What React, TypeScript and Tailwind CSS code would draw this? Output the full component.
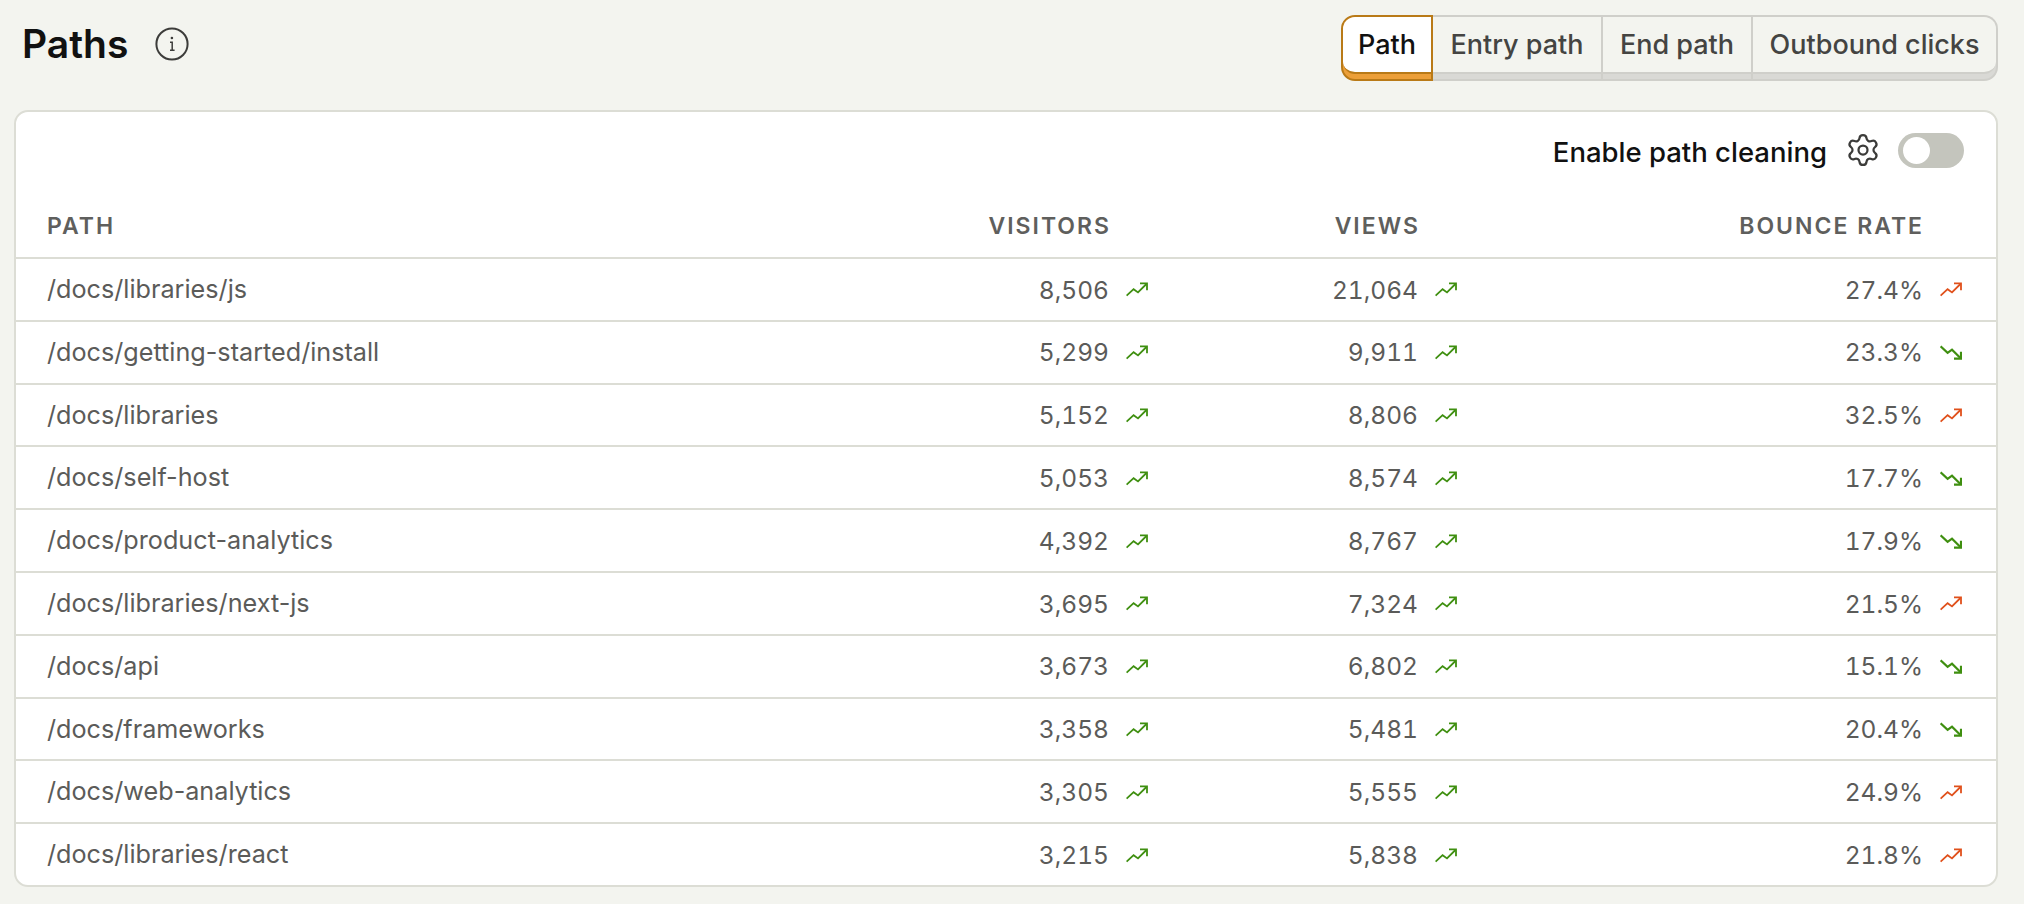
import React from 'react';
import { Settings } from 'lucide-react';

type Trend = 'up' | 'down';

interface Row {
  path: string;
  visitors: string;
  views: string;
  bounce: string;
  bounceTrend: Trend;
  bounceColor: 'good' | 'bad';
}

const rows: Row[] = [
  { path: '/docs/libraries/js', visitors: '8,506', views: '21,064', bounce: '27.4%', bounceTrend: 'up', bounceColor: 'bad' },
  { path: '/docs/getting-started/install', visitors: '5,299', views: '9,911', bounce: '23.3%', bounceTrend: 'down', bounceColor: 'good' },
  { path: '/docs/libraries', visitors: '5,152', views: '8,806', bounce: '32.5%', bounceTrend: 'up', bounceColor: 'bad' },
  { path: '/docs/self-host', visitors: '5,053', views: '8,574', bounce: '17.7%', bounceTrend: 'down', bounceColor: 'good' },
  { path: '/docs/product-analytics', visitors: '4,392', views: '8,767', bounce: '17.9%', bounceTrend: 'down', bounceColor: 'good' },
  { path: '/docs/libraries/next-js', visitors: '3,695', views: '7,324', bounce: '21.5%', bounceTrend: 'up', bounceColor: 'bad' },
  { path: '/docs/api', visitors: '3,673', views: '6,802', bounce: '15.1%', bounceTrend: 'down', bounceColor: 'good' },
  { path: '/docs/frameworks', visitors: '3,358', views: '5,481', bounce: '20.4%', bounceTrend: 'down', bounceColor: 'good' },
  { path: '/docs/web-analytics', visitors: '3,305', views: '5,555', bounce: '24.9%', bounceTrend: 'up', bounceColor: 'bad' },
  { path: '/docs/libraries/react', visitors: '3,215', views: '5,838', bounce: '21.8%', bounceTrend: 'up', bounceColor: 'bad' },
];

const tabs = [
  { label: 'Entry path', width: 'w-[168px]' },
  { label: 'End path', width: 'w-[150px]' },
  { label: 'Outbound clicks', width: 'w-[245px]' },
];

function InfoIcon() {
  return (
    <svg viewBox="0 0 34 34" fill="none" stroke="currentColor" className="h-[34px] w-[34px] text-[#3c3c3a]">
      <circle cx="17" cy="17" r="15.6" strokeWidth="2" />
      <path d="M15 15.2 H17.2 V23.2 M15 23.2 H19.6" strokeWidth="1.5" />
      <circle cx="16.9" cy="11" r="1.3" fill="currentColor" stroke="none" />
    </svg>
  );
}

function TrendIcon({ trend, bad }: { trend: Trend; bad?: boolean }) {
  const color = bad ? 'text-[#e0501b]' : 'text-[#3f8f10]';
  return (
    <svg viewBox="0 0 22 15" fill="none" stroke="currentColor" strokeWidth="1.8" className={`h-[15px] w-[22px] shrink-0 ${color}`}>
      {trend === 'up' ? (
        <>
          <path d="M0.6 13.6 L7.6 7.2 L12 10.4 L20.4 2" />
          <path d="M14 1.3 H21 V8.2" />
        </>
      ) : (
        <>
          <path d="M0.6 1.4 L7.6 7.8 L12 4.6 L20.4 13" strokeWidth="2.2" />
          <path d="M14 13.7 H21 V6.8" strokeWidth="2.2" />
        </>
      )}
    </svg>
  );
}

function Cell({ value, trend, bad }: { value: string; trend: Trend; bad?: boolean }) {
  return (
    <div className="flex items-center justify-end gap-[17px]">
      <span className="text-[24.5px] tabular-nums">{value}</span>
      <TrendIcon trend={trend} bad={bad} />
    </div>
  );
}

export default function App() {
  return (
    <div className="min-h-screen bg-[#f3f4ef] pl-[14px] pr-[26px] pt-[15px] font-['Inter',sans-serif]">
      {/* Header */}
      <div className="flex h-[66px] items-start justify-between">
        <div className="flex items-center gap-[27px] pl-[8px] pt-[9px]">
          <h1 className="text-[39px] font-semibold leading-[40px] text-[#111111]">Paths</h1>
          <InfoIcon />
        </div>

        <div className="flex h-[66px] text-[27px] font-medium">
          <div className="flex w-[92px] flex-col rounded-l-[14px] border-2 border-[#b97a17] bg-[#ec9f38]">
            <div className="flex h-[57px] items-center justify-center rounded-l-[12px] border-b-2 border-[#b97a17] bg-white pt-[2px] text-[#111111]">
              Path
            </div>
          </div>
          <div className="flex overflow-hidden rounded-r-[14px] border-y-2 border-r-2 border-[#cfcfca] bg-[#d9d9d5]">
            {tabs.map((tab, i) => (
              <div key={tab.label} className={`flex flex-col ${tab.width} ${i > 0 ? 'border-l-2 border-[#cfcfca]' : ''}`}>
                <div className={`flex h-[57px] items-center justify-center border-b-2 border-[#cfcfca] bg-[#f3f4ef] pt-[2px] text-[#444442] ${i === 2 ? 'rounded-br-[12px]' : ''}`}>
                  {tab.label}
                </div>
              </div>
            ))}
          </div>
        </div>
      </div>

      {/* Card */}
      <div className="mt-[29px] overflow-hidden rounded-[14px] border-2 border-[#dcddd5] bg-white text-[25.2px] text-[#5b5b59]">
        <div className="flex h-[76px] items-center justify-end pr-[32px]">
          <span className="pt-[5px] text-[27.5px] font-medium text-[#111111]">Enable path cleaning</span>
          <Settings className="ml-[18px] h-[36px] w-[36px] text-[#3c3c3a]" strokeWidth={1.5} />
          <div className="ml-[17px] flex h-[35px] w-[66px] items-center rounded-full bg-[#c4c5bd] pl-[5px]">
            <div className="h-[27px] w-[27px] rounded-full bg-white" />
          </div>
        </div>

        <div className="grid h-[69px] grid-cols-[1fr_309px_309px_505px] items-center pl-[31px] pr-[34px] pt-[7px] text-[23px] font-semibold tracking-[2px] text-[#5f5f5d]">
          <div>PATH</div>
          <div className="pr-[37px] text-right">VISITORS</div>
          <div className="pr-[37px] text-right">VIEWS</div>
          <div className="pr-[38px] text-right">BOUNCE RATE</div>
        </div>

        {rows.map((row) => (
          <div
            key={row.path}
            className="grid h-[62.8px] grid-cols-[1fr_309px_309px_505px] items-center border-t-2 border-[#dcddd5] pl-[31px] pr-[34px] pt-[1px]"
          >
            <div>{row.path}</div>
            <Cell value={row.visitors} trend="up" />
            <Cell value={row.views} trend="up" />
            <Cell value={row.bounce} trend={row.bounceTrend} bad={row.bounceColor === 'bad'} />
          </div>
        ))}
      </div>
    </div>
  );
}
